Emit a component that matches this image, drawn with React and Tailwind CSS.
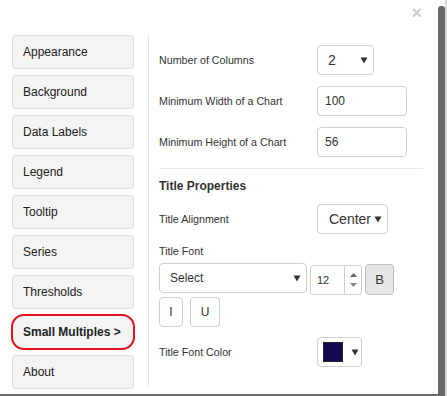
const NAV = [
  "Appearance",
  "Background",
  "Data Labels",
  "Legend",
  "Tooltip",
  "Series",
  "Thresholds",
  "Small Multiples >",
  "About",
];

function Caret() {
  return (
    <svg viewBox="0 0 8 7" className="h-[7px] w-[8px]" xmlns="http://www.w3.org/2000/svg">
      <path d="M0.5 0.5H7.5L4 6.5Z" fill="#333" />
    </svg>
  );
}

function Row({ label, children, className = "" }) {
  return (
    <div className={"flex items-center " + className}>
      <span className="w-[158px] shrink-0 text-[10.7px] text-[#333]">{label}</span>
      {children}
    </div>
  );
}

export default function App() {
  return (
    <div
      className="flex h-[396px] w-[447px] overflow-hidden bg-white"
      style={{ fontFamily: '"Liberation Sans", Arial, sans-serif' }}
    >
      <div className="flex flex-1 flex-col border-b-2 border-[#6a6a6a]">
        <div className="flex justify-end pr-[16px] pt-[4px]">
          <span className="text-[18px] font-bold leading-[18px] text-[#cfcfcf]">×</span>
        </div>
        <div className="flex flex-1 pl-[12px] pt-[13px]">
          <div className="flex w-[122px] shrink-0 flex-col gap-[6px]">
            {NAV.map((item) => {
              const active = item.startsWith("Small");
              return (
                <div
                  key={item}
                  className={
                    "flex h-[34px] items-center rounded-[3px] border border-[#e0e0e0] bg-[#f4f4f4] pl-[10px] text-[12px] text-[#222] " +
                    (active ? "font-bold outline-2 outline-offset-[-1px] outline-[#e3121b] rounded-[12px]" : "")
                  }
                >
                  {item}
                </div>
              );
            })}
          </div>
          <div className="ml-[14px] mb-[7px] w-px bg-[#e6e6e6]" />
          <div className="flex w-[264px] flex-col pl-[10px] pt-[10px]">
            <Row label="Number of Columns">
              <div className="flex h-[30px] w-[57px] items-center justify-between rounded-[4px] border border-[#cfcfcf] pl-[10px] pr-[5px] text-[14px] text-[#333]">
                <span>2</span>
                <Caret />
              </div>
            </Row>
            <Row label="Minimum Width of a Chart" className="mt-[11px]">
              <div className="flex h-[30px] w-[90px] items-center rounded-[4px] border border-[#cfcfcf] pl-[7px] text-[12px] text-[#333]">
                100
              </div>
            </Row>
            <Row label="Minimum Height of a Chart" className="mt-[11px]">
              <div className="flex h-[30px] w-[90px] items-center rounded-[4px] border border-[#cfcfcf] pl-[7px] text-[12px] text-[#333]">
                56
              </div>
            </Row>
            <div className="mt-[11px] h-px w-[264px] bg-[#e8e8e8]" />
            <div className="mt-[9px] text-[12px] font-bold leading-[16px] text-[#333]">Title Properties</div>
            <Row label="Title Alignment" className="mt-[10px]">
              <div className="flex h-[30px] w-[71px] items-center justify-between rounded-[4px] border border-[#cfcfcf] pl-[11px] pr-[5px] text-[14px] text-[#333]">
                <span>Center</span>
                <Caret />
              </div>
            </Row>
            <div className="mt-[10px] text-[10.7px] leading-[14px] text-[#333]">Title Font</div>
            <div className="mt-[5px] flex items-start">
              <div className="flex h-[30px] w-[148px] items-center justify-between rounded-[4px] border border-[#cfcfcf] pl-[10px] pr-[5px] text-[12px] text-[#333]">
                <span>Select</span>
                <Caret />
              </div>
              <div className="ml-[3px] mt-[2px] flex h-[30px] w-[52px] rounded-[3px] border border-[#cfcfcf]">
                <span className="flex flex-1 items-end pb-[6px] pl-[6px] text-[11px] text-[#333]">12</span>
                <div className="flex w-[17px] flex-col items-center justify-center gap-[6px] border-l border-[#cfcfcf]">
                  <svg viewBox="0 0 7 4" className="h-[4px] w-[7px]" xmlns="http://www.w3.org/2000/svg">
                    <path d="M0 4H7L3.5 0Z" fill="#666" />
                  </svg>
                  <svg viewBox="0 0 7 4" className="h-[4px] w-[7px]" xmlns="http://www.w3.org/2000/svg">
                    <path d="M0 0H7L3.5 4Z" fill="#888" />
                  </svg>
                </div>
              </div>
              <div className="ml-[3px] mt-[1px] flex h-[31px] w-[29px] items-center justify-center rounded-[4px] border border-[#bdbdbd] bg-[#e6e6e6] text-[13px] text-[#333]">
                B
              </div>
            </div>
            <div className="mt-[2px] flex gap-[7px]">
              <div className="flex h-[30px] w-[24px] items-center justify-center rounded-[4px] border border-[#cfcfcf] text-[12px] text-[#333]">
                I
              </div>
              <div className="flex h-[30px] w-[30px] items-center justify-center rounded-[4px] border border-[#cfcfcf] text-[12px] text-[#333]">
                U
              </div>
            </div>
            <Row label="Title Font Color" className="mt-[10px]">
              <div className="flex h-[30px] w-[45px] items-center rounded-[4px] border border-[#cfcfcf] pl-[5px]">
                <span className="h-[20px] w-[20px] border border-[#222] bg-[#120a4d]" />
                <span className="ml-[8px]">
                  <Caret />
                </span>
              </div>
            </Row>
          </div>
        </div>
      </div>
      <div className="mt-[6px] w-[7px] rounded-t-[3px] bg-[#686868]" />
      <div className="w-[2px] bg-[#d8d8d8]" />
    </div>
  );
}
